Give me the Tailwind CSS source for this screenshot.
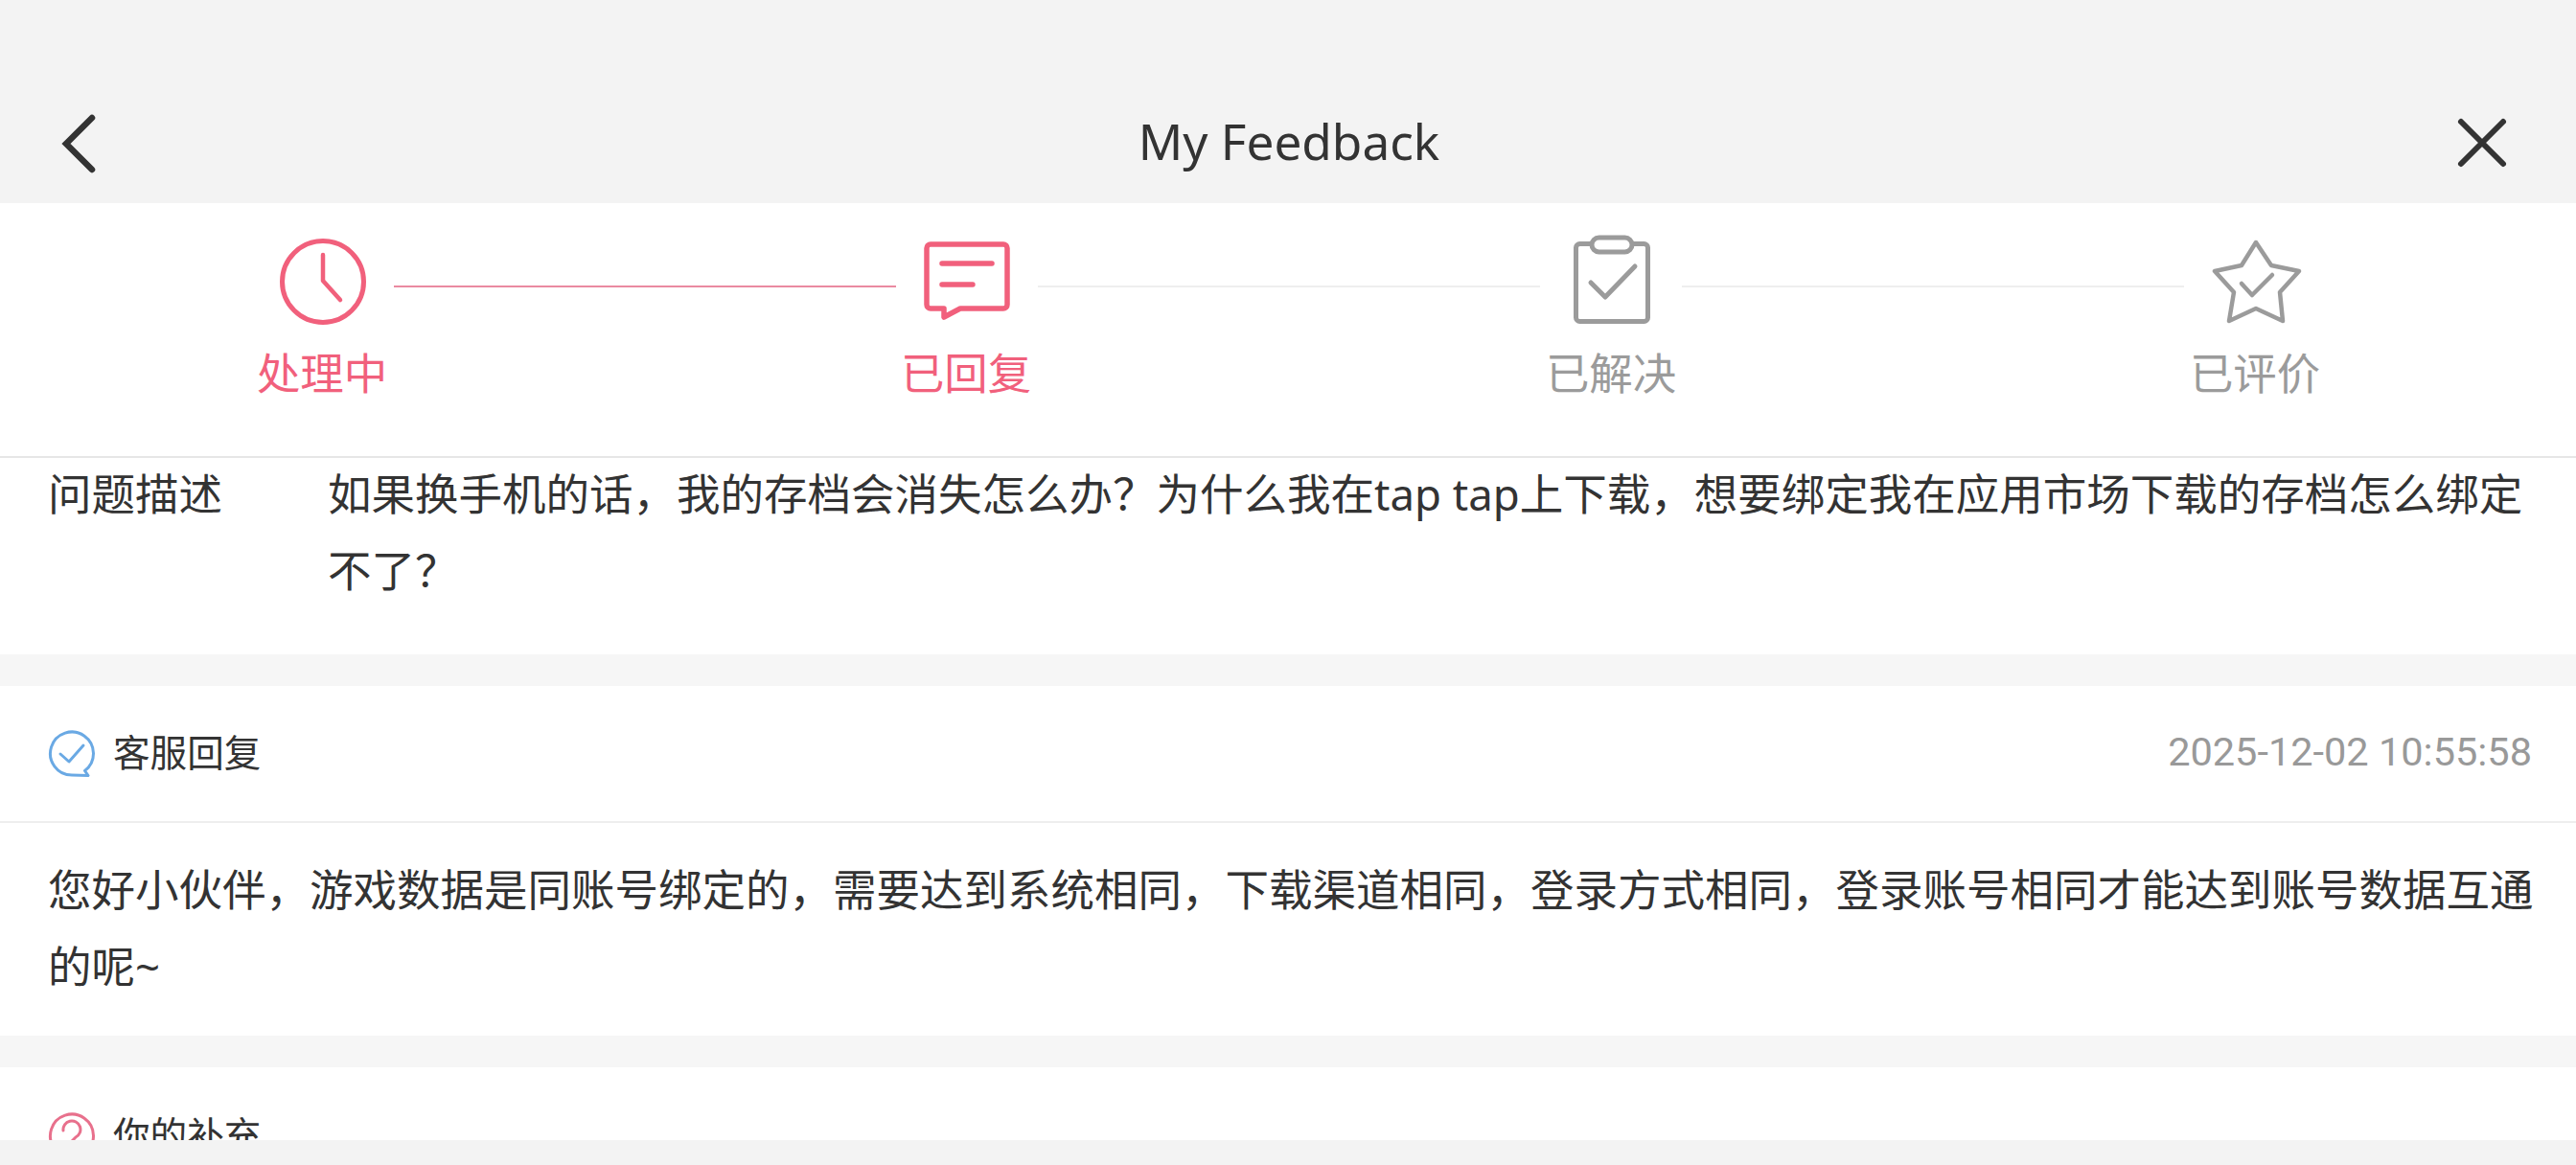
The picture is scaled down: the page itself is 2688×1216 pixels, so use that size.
<!DOCTYPE html>
<html lang="zh">
<head>
<meta charset="utf-8">
<script src="https://cdn.jsdelivr.net/npm/@tailwindcss/browser@4"></script>
</head>
<body class="m-0">
<div class="w-[2688px] h-[1216px] flex flex-col overflow-hidden bg-white text-[#333333] font-['Noto_Sans','Noto_Sans_CJK_SC',sans-serif]">
  <header class="h-[212px] shrink-0 bg-[#f3f3f3] flex items-end justify-between pb-[22px]">
    <svg class="ml-[52px] mb-[4px]" width="70" height="70" viewBox="0 0 70 70" fill="none" stroke="#333333" stroke-width="6.5" stroke-linecap="round" stroke-linejoin="miter"><path d="M44 7 L17 34 L44 61"/></svg>
    <div class="flex-1 pl-[13px] text-center text-[51.3px] leading-[70px] text-[#333333] mb-[8px]">My Feedback</div>
    <svg class="mr-[63px] mb-[6px]" width="70" height="70" viewBox="0 0 70 70" fill="none" stroke="#333333" stroke-width="6" stroke-linecap="round"><path d="M13 13 L57 57 M57 13 L13 57"/></svg>
  </header>

  <section class="h-[266px] shrink-0 border-b-2 border-[#e6e6e6] bg-white">
    <div class="flex items-center pl-[286px] pt-[33px] h-[133px]">
      <svg class="shrink-0" width="100" height="100" viewBox="0 0 100 100" fill="none" stroke="#f1607c" stroke-width="5" stroke-linecap="round" stroke-linejoin="round"><circle cx="51" cy="49" r="42.5"/><path d="M51 21 V48 L69 68" stroke-width="4.5"/></svg>
      <div class="w-[524px] h-[2px] ml-[25px] mt-[8px] shrink-0 bg-[#ea8aa1]"></div>
      <svg class="shrink-0 ml-[23px]" width="100" height="100" viewBox="0 0 100 100" fill="none" stroke="#f1607c" stroke-width="5.5" stroke-linecap="round" stroke-linejoin="round"><path d="M13 10 H89 a4 4 0 0 1 4 4 V73 a4 4 0 0 1 -4 4 H44 L27 86 V77 H13 a4 4 0 0 1 -4 -4 V14 a4 4 0 0 1 4 -4Z"/><path d="M25 30 H77 M25 52 H57"/></svg>
      <div class="w-[524px] h-[2px] ml-[25px] mt-[8px] shrink-0 bg-[#eeeeee]"></div>
      <svg class="shrink-0 ml-[23px]" width="100" height="100" viewBox="0 0 100 100" fill="none" stroke="#9b9b9b" stroke-width="5" stroke-linecap="round" stroke-linejoin="round"><rect x="14.5" y="9.5" width="75" height="81" rx="4"/><rect x="31" y="3" width="42" height="15" rx="7.5" fill="#ffffff"/><path d="M30 50 L45 65 L76 33"/></svg>
      <div class="w-[524px] h-[2px] ml-[25px] mt-[8px] shrink-0 bg-[#eeeeee]"></div>
      <svg class="shrink-0 ml-[23px] overflow-visible" width="100" height="100" viewBox="0 0 100 100" fill="none" stroke="#9b9b9b" stroke-width="4.5" stroke-linecap="round" stroke-linejoin="round"><path d="M52 8 L68 32 L97 38 L77 60 L80 90 L52 77 L24 90 L29 60 L9 38 L37 32Z"/><path d="M37 51 L48 63 L69 42"/></svg>
    </div>
    <div class="grid grid-cols-4 text-center text-[45.4px] leading-[60px] pt-[14px]">
      <div class="text-[#f1607c]">处理中</div>
      <div class="text-[#f1607c]">已回复</div>
      <div class="text-[#9b9b9b] pl-[2px]">已解决</div>
      <div class="text-[#9b9b9b] pl-[2px]">已评价</div>
    </div>
  </section>

  <main class="flex-1 min-h-0 overflow-hidden bg-[#f6f6f6]">
    <section class="bg-white h-[205px] pl-[50px] pr-[50px] flex text-[45.5px] leading-[80px]">
      <div class="w-[292px] shrink-0 -mt-[3px]">问题描述</div>
      <div class="flex-1 -mt-[3px]">如果换手机的话，我的存档会消失怎么办？为什么我在tap tap上下载，想要绑定我在应用市场下载的存档怎么绑定不了？</div>
    </section>

    <section class="bg-white mt-[33px]">
      <div class="h-[143px] border-b-2 border-[#eeeeee] pl-[50px] pr-[46px] flex items-center justify-between">
        <div class="flex items-center gap-[18px] -mt-[4px]">
          <svg class="mt-[4px]" width="50" height="50" viewBox="0 0 50 50" fill="none" stroke="#6aa9e4" stroke-width="3" stroke-linecap="round" stroke-linejoin="round"><path d="M25 47 A22.5 22.5 0 1 1 38.5 42.5 L42 47.5 Z"/><path d="M13 25 L22 33 L37 16"/></svg>
          <span class="text-[38.6px] leading-[50px]">客服回复</span>
        </div>
        <span class="text-[41.5px] -mt-[3px] text-[#999999] font-['Roboto',sans-serif]">2025-12-02 10:55:58</span>
      </div>
      <div class="pl-[50px] pr-[40px] pt-[29px] pb-[33px] text-[45.5px] leading-[80px]">您好小伙伴，游戏数据是同账号绑定的，需要达到系统相同，下载渠道相同，登录方式相同，登录账号相同才能达到账号数据互通的呢~</div>
    </section>

    <section class="bg-white mt-[33px] h-[143px] pl-[50px] flex items-center">
      <div class="flex items-center gap-[18px] -mt-[4px]">
        <svg class="mt-[4px]" width="50" height="50" viewBox="0 0 50 50" fill="none" stroke="#e8708c" stroke-width="3" stroke-linecap="round" stroke-linejoin="round"><path d="M25 47 A22.5 22.5 0 1 1 38.5 42.5 L42 47.5 Z"/><path d="M16 19 A9 9 0 1 1 29 26 L25 30 V33"/></svg>
        <span class="text-[38.6px] leading-[50px]">你的补充</span>
      </div>
    </section>
  </main>

  <footer class="h-[26px] shrink-0 bg-[#f3f3f3]"></footer>
</div>
</body>
</html>
